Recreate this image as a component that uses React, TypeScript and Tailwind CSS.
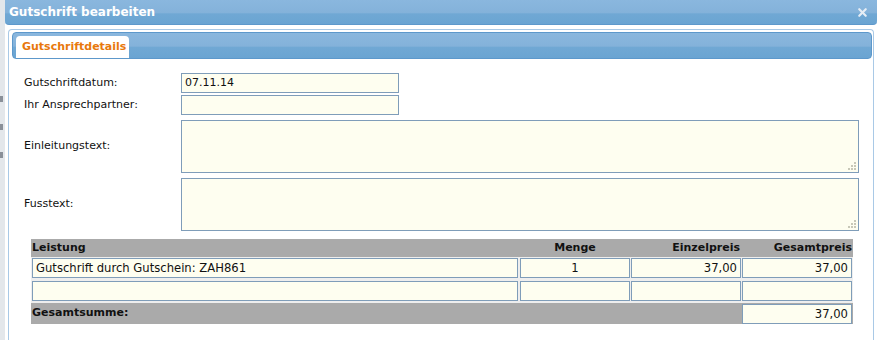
import { X } from 'lucide-react'

/* Field styles */
const inputCls =
  'h-[20px] border border-[#7f9db9] bg-[#fefef0] px-[3px] leading-[18px] text-[#111] outline-none'

function Field({
  value = '',
  align = 'left',
  className = '',
}: {
  value?: string
  align?: 'left' | 'right' | 'center'
  className?: string
}) {
  const alignCls = align === 'right' ? 'text-right' : align === 'center' ? 'text-center' : 'text-left'
  return <div className={`${inputCls} ${alignCls} ${className}`}>{value}</div>
}

function TextArea() {
  return (
    <div className="relative h-[53px] w-[678px] border border-[#7f9db9] bg-[#fefef0]">
      {/* resize grip */}
      <svg className="absolute bottom-[1px] right-[1px]" width="10" height="10" viewBox="0 0 10 10">
        <g fill="#c8c8b8">
          <rect x="7" y="1" width="2" height="2" />
          <rect x="4" y="4" width="2" height="2" />
          <rect x="7" y="4" width="2" height="2" />
          <rect x="1" y="7" width="2" height="2" />
          <rect x="4" y="7" width="2" height="2" />
          <rect x="7" y="7" width="2" height="2" />
        </g>
      </svg>
    </div>
  )
}

const rows = [
  { leistung: 'Gutschrift durch Gutschein: ZAH861', menge: '1', einzel: '37,00', gesamt: '37,00' },
  { leistung: '', menge: '', einzel: '', gesamt: '' },
]

export default function App() {
  return (
    <div
      className="flex h-[340px] w-[878px] overflow-hidden bg-white"
      style={{ fontFamily: '"DejaVu Sans", Verdana, sans-serif' }}
    >
      {/* Page behind the dialog */}
      <div className="flex w-[5px] flex-col gap-[22px] bg-[#e3e7eb] pt-[96px]">
        <div className="h-[6px] w-[3px] bg-[#8a9099]" />
        <div className="h-[6px] w-[3px] bg-[#8a9099]" />
        <div className="h-[6px] w-[3px] bg-[#8a9099]" />
      </div>

      <div className="flex flex-1 flex-col">
        {/* Title bar */}
        <div className="mr-[1px] flex h-[25px] items-center justify-between rounded-b-[4px] border-b border-[#5d98cb] bg-[linear-gradient(to_bottom,#8ab7de_0%,#84b2da_52%,#70a8d4_58%,#6aa4d2_100%)] pl-[4px] pr-[8px]">
          <span className="text-[12px] font-bold text-white">Gutschrift bearbeiten</span>
          <X className="h-[13px] w-[13px] text-[#e6edf5]" strokeWidth={4} />
        </div>

        {/* Dialog body */}
        <div className="ml-[3px] mr-[4px] mt-[4px] flex flex-1 flex-col rounded-t-[4px] border border-b-0 border-[#a9c9e6] bg-white">
          {/* Tab strip */}
          <div className="ml-[3px] mr-[1px] mt-[2px] flex h-[27px] items-end rounded-[4px] border border-[#5d98cb] bg-[linear-gradient(to_bottom,#8ab7de_0%,#84b2da_52%,#70a8d4_58%,#6aa4d2_100%)] pl-[3px]">
            <div className="flex h-[22px] w-[113px] items-center rounded-t-[4px] bg-white pl-[6px] text-[11px] font-bold text-[#e8780c]">
              Gutschriftdetails
            </div>
          </div>

          {/* Form */}
          <div className="mt-[14px] grid grid-cols-[157px_auto] items-center gap-y-[2px] pl-[15px] text-[11px]">
            <span className="text-[#111]">Gutschriftdatum:</span>
            <div className="w-[218px]">
              <Field value="07.11.14" />
            </div>
            <span className="text-[#111]">Ihr Ansprechpartner:</span>
            <div className="w-[218px]">
              <Field />
            </div>
            <span className="mt-[3px] text-[#111]">Einleitungstext:</span>
            <div className="mt-[3px]">
              <TextArea />
            </div>
            <span className="mt-[3px] text-[#111]">Fusstext:</span>
            <div className="mt-[3px]">
              <TextArea />
            </div>
          </div>

          {/* Positions table */}
          <div className="ml-[22px] mt-[8px] w-[822px] text-[11px] text-[#111]">
            <div className="flex h-[18px] items-center bg-[#aaaaaa] font-bold">
              <span className="w-[487px] pl-[1px]">Leistung</span>
              <span className="ml-[2px] w-[110px] text-center">Menge</span>
              <span className="ml-[1px] w-[110px] pr-[1px] text-right">Einzelpreis</span>
              <span className="ml-[1px] w-[110px] text-right">Gesamtpreis</span>
            </div>
            <div className="flex flex-col gap-[3px] bg-[#eeeeee] pb-[2px] pl-[1px] pt-[1px]">
              {rows.map((r, i) => (
                <div key={i} className="flex text-[11.6px]">
                  <Field value={r.leistung} className="w-[486px]" />
                  <Field value={r.menge} align="center" className="ml-[2px] w-[110px]" />
                  <Field value={r.einzel} align="right" className="ml-[1px] w-[110px]" />
                  <Field value={r.gesamt} align="right" className="ml-[1px] w-[110px]" />
                </div>
              ))}
            </div>
            <div className="flex h-[21px] items-center bg-[#aaaaaa] pl-[1px]">
              <span className="w-[710px] font-bold">Gesamtsumme:</span>
              <Field value="37,00" align="right" className="w-[110px] text-[11.6px]" />
            </div>
          </div>
        </div>
      </div>
    </div>
  )
}
